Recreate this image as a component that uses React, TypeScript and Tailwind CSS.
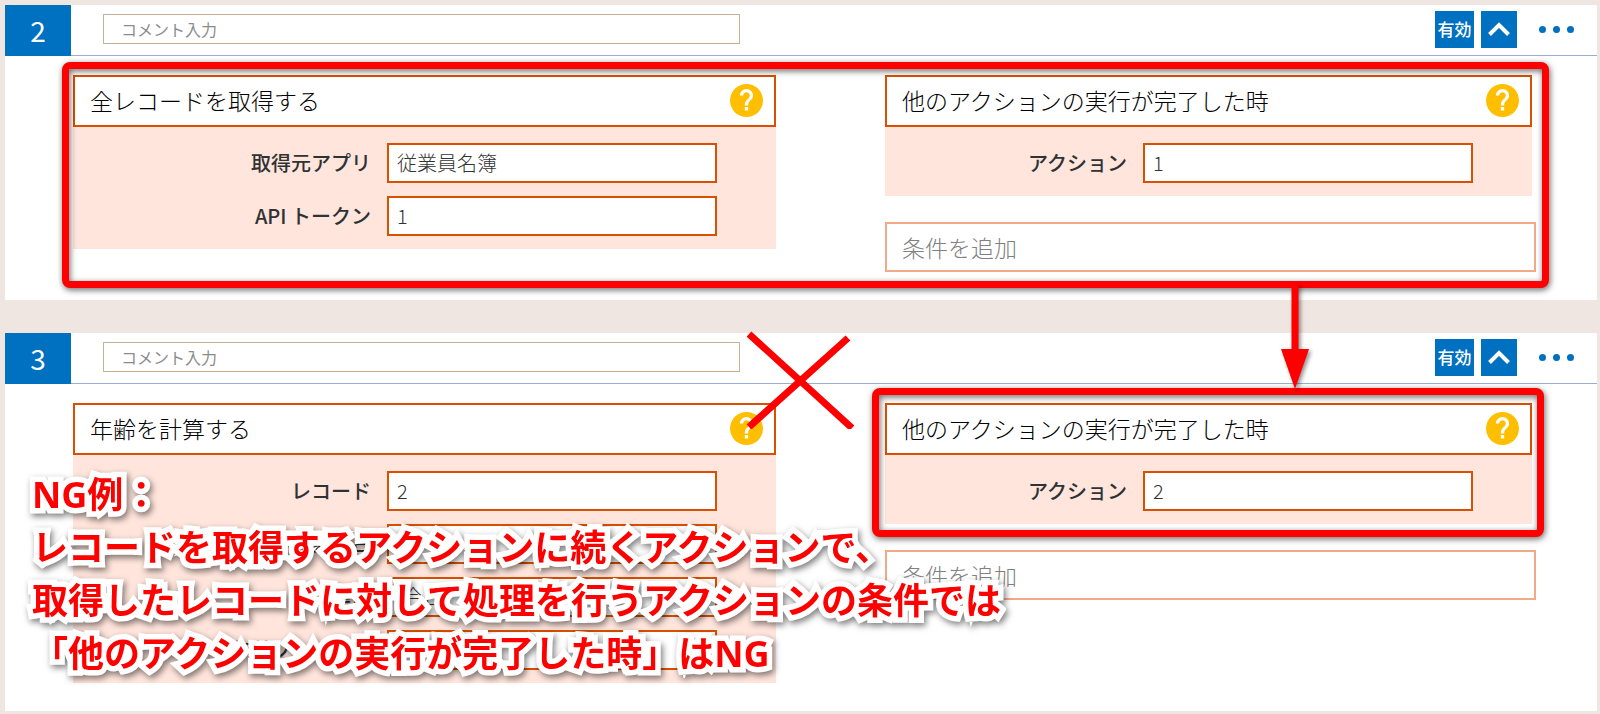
import { useId } from 'react'

type Field = { label: string; value: string }

type StepProps = {
  no: number
  action: string
  fields: Field[]
  condition: string
  target: string
  marker: 'step' | 'condition'
}

const steps: StepProps[] = [
  {
    no: 2,
    action: '全レコードを取得する',
    fields: [
      { label: '取得元アプリ', value: '従業員名簿' },
      { label: 'API トークン', value: '1' },
    ],
    condition: '他のアクションの実行が完了した時',
    target: '1',
    marker: 'step',
  },
  {
    no: 3,
    action: '年齢を計算する',
    fields: [
      { label: 'レコード', value: '2' },
      { label: '誕生日', value: '' },
      { label: '基準日', value: '(今日)' },
      { label: '年齢フィールド', value: '' },
    ],
    condition: '他のアクションの実行が完了した時',
    target: '2',
    marker: 'condition',
  },
]

function HelpButton() {
  return (
    <button aria-label="ヘルプ" className="shrink-0">
      <svg viewBox="2 2 20 20" className="h-[33px] w-[33px]">
        <circle cx="12" cy="12" r="10" fill="#ffbf00" />
        <path
          fill="#fff"
          d="M13 18h-2v-2h2v2zm2.07-6.75l-.9.92C13.45 12.9 13 13.5 13 15h-2v-.5c0-1.1.45-2.1 1.17-2.83l1.24-1.26c.37-.36.59-.86.59-1.41 0-1.1-.9-2-2-2s-2 .9-2 2H8c0-2.21 1.79-4 4-4s4 1.79 4 4c0 .88-.36 1.68-.93 2.25z"
        />
      </svg>
    </button>
  )
}

function FieldRow({ label, value }: Field) {
  const id = useId()
  return (
    <div className="flex items-center justify-end gap-4">
      <label htmlFor={id} className="text-xl font-medium whitespace-nowrap text-[#2e3234]">{label}</label>
      <input
        id={id}
        defaultValue={value}
        className="h-10 w-[330px] border-2 border-[#d95000] bg-white px-2 pb-0.5 text-xl font-extralight text-[#333]"
      />
    </div>
  )
}

function Block({ title, fields }: { title: string; fields: Field[] }) {
  return (
    <div className="bg-[#ffe5dc]">
      <div className="flex h-[52px] items-center justify-between border-2 border-[#d95000] bg-white pr-[11px] pb-0.5 pl-[15px]">
        <h2 className="text-[23px] font-light text-black">{title}</h2>
        <HelpButton />
      </div>
      <div className="flex flex-col gap-[13px] pt-4 pr-[59px] pb-[13px]">
        {fields.map(f => <FieldRow key={f.label} {...f} />)}
      </div>
    </div>
  )
}

const frame = 'pointer-events-none absolute z-10 rounded-lg border-[7px] border-[#ff0000] drop-shadow-[1px_2px_3px_rgba(0,0,0,0.6)]'

function Arrow() {
  return (
    <svg
      viewBox="0 0 28 105"
      className="pointer-events-none absolute -bottom-[117px] left-[396px] z-20 h-[105px] w-7 drop-shadow-[2px_2px_2px_rgba(0,0,0,0.45)]"
    >
      <path d="M10.5 0h7v65H28L14 105 0 65h10.5z" fill="#ff0000" />
    </svg>
  )
}

function Cross() {
  return (
    <svg viewBox="0 0 108 98" className="pointer-events-none absolute -top-[72px] -right-[79px] z-20 h-[98px] w-[108px]">
      <path d="M2 3l103 94M101 7L2 96" stroke="#ff0000" strokeWidth="7" />
    </svg>
  )
}

function Step({ no, action, fields, condition, target, marker }: StepProps) {
  return (
    <section className="bg-white">
      <header className="flex h-[51px] items-center border-b border-[#9aafd6]">
        <div className="flex h-[51px] w-[66px] items-center justify-center bg-[#0070c0] text-[28px] text-white">{no}</div>
        <input
          aria-label="コメント"
          placeholder="コメント入力"
          className="mb-0.5 ml-8 h-[30px] w-2/5 border border-[#c8b092] px-[17px] text-base placeholder:text-[#8c8c8c]"
        />
        <div className="mr-[23px] mb-0.5 ml-auto flex items-center">
          <button className="h-[37px] w-[39px] bg-[#0070c0] text-[17px] font-medium text-white">有効</button>
          <button aria-label="折りたたむ" className="ml-[7px] flex h-[37px] w-9 items-center justify-center bg-[#0070c0]">
            <svg viewBox="0 0 22 14" className="h-[14px] w-[22px]">
              <path d="M1.5 12.5L11 3l9.5 9.5" fill="none" stroke="#fff" strokeWidth="4" />
            </svg>
          </button>
          <button aria-label="メニュー" className="ml-[22px] flex gap-[7px]">
            <span className="h-[7px] w-[7px] rounded-full bg-[#0070c0]" />
            <span className="h-[7px] w-[7px] rounded-full bg-[#0070c0]" />
            <span className="h-[7px] w-[7px] rounded-full bg-[#0070c0]" />
          </button>
        </div>
      </header>

      <div className="relative grid grid-cols-[703fr_651fr] items-start gap-[109px] pt-[19px] pr-[61px] pb-7 pl-[68px]">
        {marker === 'step' && <div className={`${frame} top-1.5 right-12 bottom-3 left-[57px]`} />}

        <div className="relative">
          <Block title={action} fields={fields} />
          {marker === 'condition' && <Cross />}
        </div>

        <div className="relative flex flex-col gap-[26px]">
          <div className="relative mr-1">
            <Block title={condition} fields={[{ label: 'アクション', value: target }]} />
            {marker === 'condition' && <div className={`${frame} -top-[15px] -right-3 -bottom-[13px] -left-[13px]`} />}
          </div>
          <input
            aria-label="条件を追加"
            placeholder="条件を追加"
            className="h-[50px] border-2 border-[#f0ab86] px-[15px] text-[23px] font-light placeholder:text-[#808080]"
          />
          {marker === 'step' && <Arrow />}
        </div>
      </div>
    </section>
  )
}

export default function App() {
  return (
    <div className="relative bg-[#efe6e1] pt-[5px] pr-[3px] pb-1 pl-[5px] font-['Noto_Sans_CJK_JP',sans-serif]">
      <main className="flex flex-col gap-[33px]">
        {steps.map(s => <Step key={s.no} {...s} />)}
      </main>

      <p className="pointer-events-none absolute bottom-[35px] left-8 z-30 font-['Noto_Sans','Noto_Sans_CJK_JP',sans-serif] text-4xl leading-[53px] font-bold whitespace-nowrap text-[#ff0000] [paint-order:stroke_fill] [stroke-linejoin:round] [-webkit-text-stroke:11px_white] drop-shadow-[2px_3px_3px_rgba(0,0,0,0.5)]">
        NG例：<br />
        レコードを取得するアクションに続くアクションで、<br />
        取得したレコードに対して処理を行うアクションの条件では<br />
        「他のアクションの実行が完了した時」はNG
      </p>
    </div>
  )
}
